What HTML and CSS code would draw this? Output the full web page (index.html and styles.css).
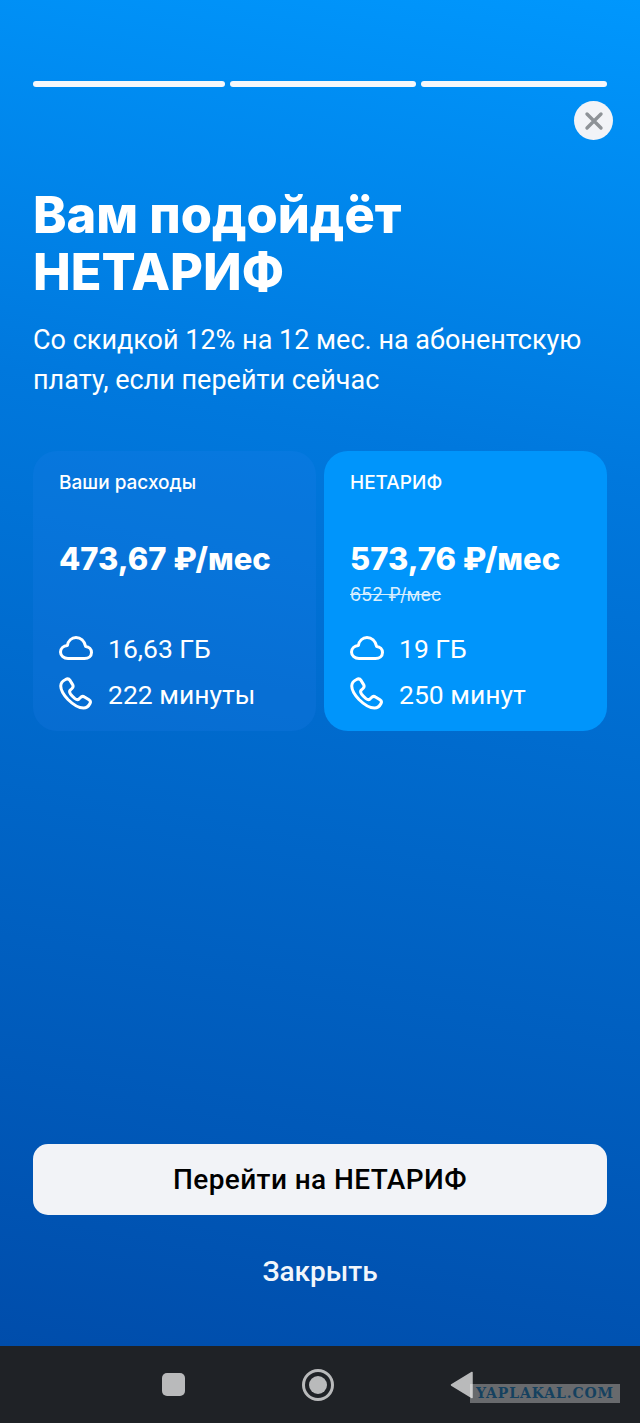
FILE: index.html
```html
<!DOCTYPE html>
<html lang="ru">
<head>
    <meta charset="utf-8">
    <title>НЕТАРИФ</title>
    <link rel="stylesheet" href="styles.css">
</head>
<body>

    <div class="screen">

        <!-- story progress -->
        <div class="progress">
            <span class="bar bar_first"></span>
            <span class="bar"></span>
            <span class="bar"></span>
        </div>

        <div class="close_row">
            <button type="button" class="close_round">
                <svg width="20" height="20" viewBox="0 0 20 20">
                    <path d="M3 3 L17 17 M17 3 L3 17" fill="none" stroke="#8e9297" stroke-width="3.4" stroke-linecap="round"/>
                </svg>
            </button>
        </div>

        <h1 class="title">Вам подойдёт<br>НЕТАРИФ</h1>
        <p class="lead">Со скидкой 12% на 12 мес. на абонентскую плату, если перейти сейчас</p>

        <!-- tariff comparison -->
        <div class="cards">
            <div class="card card_old">
                <div class="card_name">Ваши расходы</div>
                <div class="card_price">473,67 ₽/мес</div>
                <div class="card_crossed"></div>
                <div class="card_row">
                    <svg class="icon" width="34" height="24" viewBox="0 0 34 24"><use href="#cloud"/></svg>
                    <span>16,63 ГБ</span>
                </div>
                <div class="card_row">
                    <svg class="icon" width="34" height="34" viewBox="0 0 34 34"><use href="#phone"/></svg>
                    <span>222 минуты</span>
                </div>
            </div>
            <div class="card card_new">
                <div class="card_name">НЕТАРИФ</div>
                <div class="card_price">573,76 ₽/мес</div>
                <div class="card_crossed"><s>652 ₽/мес</s></div>
                <div class="card_row">
                    <svg class="icon" width="34" height="24" viewBox="0 0 34 24"><use href="#cloud"/></svg>
                    <span>19 ГБ</span>
                </div>
                <div class="card_row">
                    <svg class="icon" width="34" height="34" viewBox="0 0 34 34"><use href="#phone"/></svg>
                    <span>250 минут</span>
                </div>
            </div>
        </div>

        <!-- actions -->
        <div class="actions">
            <button type="button" class="btn_go">Перейти на НЕТАРИФ</button>
            <button type="button" class="btn_close">Закрыть</button>
        </div>
    </div>

    <!-- android navigation -->
    <div class="navbar">
        <span class="nav_square"></span>
        <span class="nav_circle"><span class="nav_dot"></span></span>
        <svg class="nav_back" width="24" height="28" viewBox="0 0 24 28">
            <path d="M22 1.5 V26.5 L1.5 14 Z" fill="#b9babb" stroke="#b9babb" stroke-width="1.5" stroke-linejoin="round"/>
        </svg>
        <div class="watermark">YAPLAKAL.COM</div>
    </div>

    <!-- shared icons -->
    <svg width="0" height="0" class="defs">
        <defs>
            <path id="cloud" d="M9 22.5 H25.5 C29.5 22.5 32.5 20 32.5 16.5 C32.5 13.2 30 10.6 26.6 10.4 C25.4 5 21.6 1.6 17 1.6 C12.6 1.6 9.2 4.8 8.4 9.4 C4.4 9.8 1.5 12.6 1.5 16 C1.5 19.8 4.8 22.5 9 22.5 Z" fill="none" stroke="currentColor" stroke-width="3" stroke-linejoin="round"/>
            <path id="phone" d="M6.5 2.5 C4.5 3.5 2 5.5 1.8 8.5 C1.5 12 4 17 9 22.5 C14.5 28 20 31 24.5 31 C27.5 31 30 28.5 31 26.5 C31.8 25 31.3 23.6 30 22.8 L25.5 20 C24 19 22.5 19.4 21.5 20.5 L20 22 C18.8 23 17.6 22.8 16 21.6 C14.5 20.4 12.5 18.4 11.4 16.8 C10.4 15.2 10.2 14 11.4 13 L13 11.5 C14.2 10.4 14.4 9 13.6 7.6 L11 3.4 C10 1.8 8.2 1.6 6.5 2.5 Z" fill="none" stroke="currentColor" stroke-width="3" stroke-linejoin="round"/>
        </defs>
    </svg>

</body>
</html>
```

FILE: styles.css
```css
/* GLOBAL */
* { box-sizing: border-box; }

html, body {
    margin: 0;
    padding: 0;
}

body {
    width: 640px;
    height: 1423px;
    overflow: hidden;
    color: white;
    font-family: Roboto, "Liberation Sans", sans-serif;
}

button {
    border: none;
    font-family: inherit;
    cursor: pointer;
}

.defs { display: block; height: 0; }

/* SCREEN */
.screen {
    height: 1346px;
    padding: 81px 33px 0 33px;
    display: flex;
    flex-direction: column;
    background: linear-gradient(190deg, #0097fd 0%, #0078dd 33%, #004dab 100%);
}

/* PROGRESS */
.progress {
    display: flex;
    gap: 4.5px;
}

.bar {
    flex: 1;
    height: 6px;
    border-radius: 3px;
    background-color: #f6f8fb;
}

.bar_first { flex: 0 0 192px; }

/* CLOSE */
.close_row {
    display: flex;
    justify-content: flex-end;
    margin: 14px -6px 0 0;
}

.close_round {
    width: 39px;
    height: 39px;
    padding: 0;
    border-radius: 50%;
    background-color: #f2f3f7;
    display: flex;
    align-items: center;
    justify-content: center;
}

/* HEADER */
.title {
    margin: 46px 0 0 0;
    font-family: Inter, Roboto, sans-serif;
    font-size: 50.5px;
    line-height: 57px;
    font-weight: 800;
}

.lead {
    margin: 20px 0 0 0;
    font-size: 27px;
    line-height: 40px;
    font-weight: 400;
}

/* CARDS */
.cards {
    display: flex;
    gap: 8px;
    margin-top: 51px;
}

.card {
    flex: 1;
    height: 280px;
    padding: 20px 26px 0 26px;
    border-radius: 24px;
}

.card_old { background-color: rgba(60, 140, 255, 0.12); }
.card_new { background-color: #0095fb; }

.card_name {
    font-family: Inter, Roboto, sans-serif;
    font-size: 19px;
    line-height: 24px;
    font-weight: 500;
}

.card_price {
    margin-top: 44px;
    font-family: Inter, Roboto, sans-serif;
    font-size: 31px;
    line-height: 40px;
    font-weight: 800;
    white-space: nowrap;
}

.card_crossed {
    height: 24px;
    margin-top: 4px;
    font-family: Inter, Roboto, sans-serif;
    font-size: 18px;
    line-height: 24px;
    opacity: 0.85;
}

.card_row {
    display: flex;
    align-items: center;
    gap: 15px;
    height: 46px;
    font-size: 26.5px;
    white-space: nowrap;
}

.card_crossed + .card_row { margin-top: 18px; }

.icon { flex: none; color: white; }

/* ACTIONS */
.actions {
    margin-top: auto;
    display: flex;
    flex-direction: column;
    align-items: stretch;
}

.btn_go {
    height: 71px;
    border-radius: 15px;
    background-color: #f2f3f7;
    color: black;
    font-size: 28px;
    letter-spacing: 0.4px;
    font-weight: 500;
}

.btn_close {
    height: 131px;
    padding-bottom: 19px;
    background: none;
    color: #f2f6fb;
    font-size: 28px;
    font-weight: 500;
}

/* NAVBAR */
.navbar {
    position: relative;
    height: 77px;
    padding: 0 166px 0 162px;
    display: flex;
    align-items: center;
    justify-content: space-between;
    background-color: #1f2226;
}

.nav_square {
    width: 23px;
    height: 23px;
    border-radius: 5px;
    background-color: #b9babb;
}

.nav_circle {
    width: 32px;
    height: 32px;
    border: 3px solid #b9babb;
    border-radius: 50%;
    display: flex;
    align-items: center;
    justify-content: center;
}

.nav_dot {
    width: 18px;
    height: 18px;
    border-radius: 50%;
    background-color: #b9babb;
}

.watermark {
    position: absolute;
    left: 470px;
    top: 38px;
    width: 150px;
    height: 19px;
    background-color: rgba(255, 255, 255, 0.33);
    color: #15415f;
    font-family: "DejaVu Serif", serif;
    font-size: 14px;
    letter-spacing: 0.9px;
    line-height: 19px;
    font-weight: 700;
    text-align: center;
    white-space: nowrap;
}
```
